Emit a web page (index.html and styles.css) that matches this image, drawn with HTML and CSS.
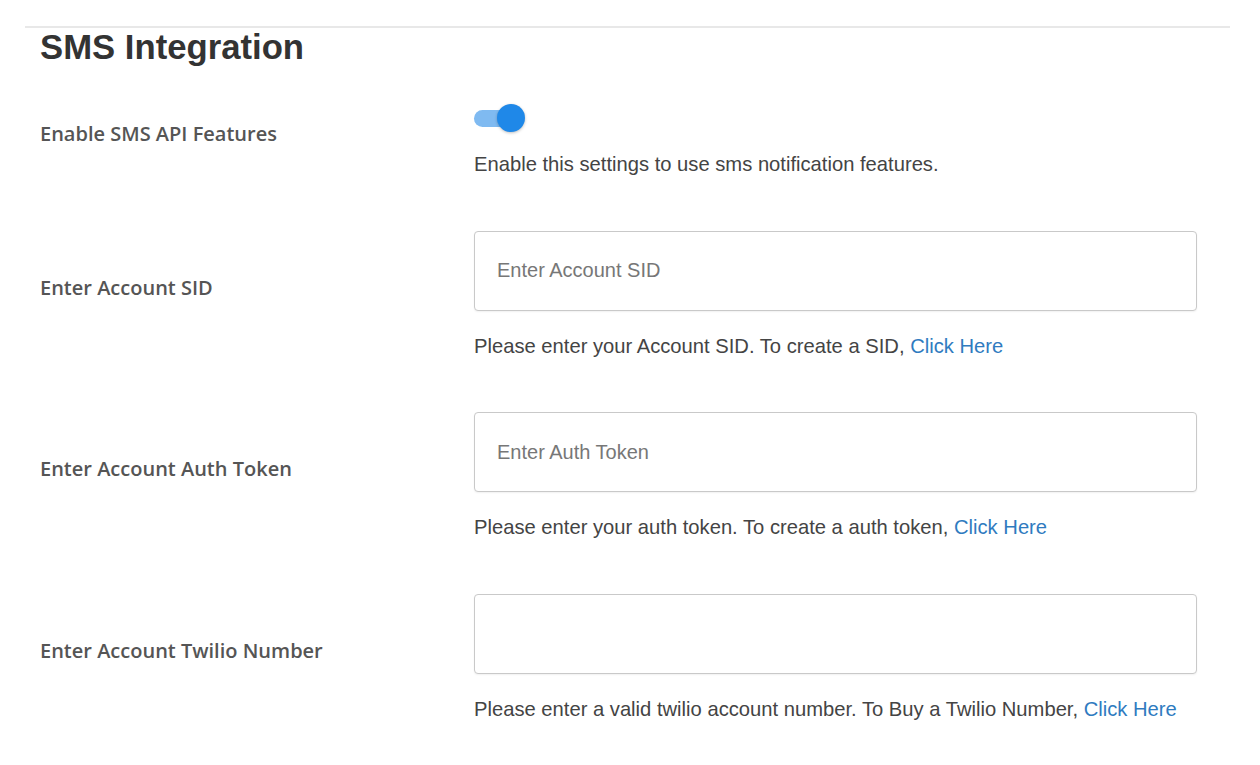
FILE: index.html
```html
<!DOCTYPE html>
<html lang="en">
<head>
<meta charset="utf-8">
<title>SMS Integration</title>
<link rel="stylesheet" href="styles.css">
</head>
<body>
<div class="panel">
  <h1 class="title">SMS Integration</h1>

  <div class="row">
    <div class="label">Enable SMS API Features</div>
    <div class="field">
      <div class="switch"><div class="track"><div class="knob"></div></div></div>
      <p class="help help-toggle">Enable this settings to use sms notification features.</p>
    </div>
  </div>

  <div class="row">
    <div class="label">Enter Account SID</div>
    <div class="field">
      <input class="input" type="text" placeholder="Enter Account SID">
      <p class="help">Please enter your Account SID. To create a SID, <a href="#" class="link">Click Here</a></p>
    </div>
  </div>

  <div class="row">
    <div class="label">Enter Account Auth Token</div>
    <div class="field">
      <input class="input" type="text" placeholder="Enter Auth Token">
      <p class="help">Please enter your auth token. To create a auth token, <a href="#" class="link">Click Here</a></p>
    </div>
  </div>

  <div class="row">
    <div class="label">Enter Account Twilio Number</div>
    <div class="field">
      <input class="input" type="text" placeholder="">
      <p class="help">Please enter a valid twilio account number. To Buy a Twilio Number, <a href="#" class="link">Click Here</a></p>
    </div>
  </div>
</div>
</body>
</html>
```

FILE: styles.css
```css
html, body {
  margin: 0;
  padding: 0;
  background: #ffffff;
}

body {
  font-family: "Liberation Sans", Arial, sans-serif;
  color: #333333;
}

.panel {
  margin: 26px 0 0 25px;
  width: 1205px;
  border-top: 2px solid #e8e8e8;
  padding-left: 15px;
  box-sizing: border-box;
}

.title {
  margin: 0;
  font-family: "Liberation Sans", Arial, sans-serif;
  font-size: 34.7px;
  line-height: 38px;
  font-weight: 700;
  color: #333333;
}

.row {
  display: grid;
  grid-template-columns: 434px 723px;
  align-items: center;
  margin-bottom: 54.5px;
}

.title + .row {
  margin-top: 38px;
}

.label {
  font-family: "Open Sans", Lato, sans-serif;
  font-weight: 600;
  font-size: 20px;
  line-height: 24px;
  color: #555555;
  padding-bottom: 13px;
}

.field {
  display: flex;
  flex-direction: column;
  align-items: flex-start;
}

.switch {
  display: flex;
  align-items: center;
  height: 28px;
}

.track {
  width: 44px;
  height: 17px;
  border-radius: 9px;
  background: #7fbaf1;
  display: flex;
  align-items: center;
  justify-content: flex-end;
}

.knob {
  flex-shrink: 0;
  width: 28px;
  height: 28px;
  border-radius: 50%;
  background: #1f88e8;
  margin-right: -7px;
  box-shadow: 0 1px 3px rgba(0, 0, 0, 0.25);
}

.input {
  width: 723px;
  height: 80px;
  box-sizing: border-box;
  border: 1px solid #c9c9c9;
  border-radius: 4px;
  padding: 0 22px;
  font-family: "Liberation Sans", Arial, sans-serif;
  font-size: 20px;
  color: #333333;
  outline: none;
  box-shadow: 0 1px 2px rgba(0, 0, 0, 0.06);
}

.input::placeholder {
  color: #777777;
}

.help {
  margin: 23px 0 0 0;
  font-size: 20.2px;
  line-height: 24px;
  color: #444444;
}

.help-toggle {
  margin-top: 20px;
}

.link {
  color: #2f7bbf;
  text-decoration: none;
}
```
